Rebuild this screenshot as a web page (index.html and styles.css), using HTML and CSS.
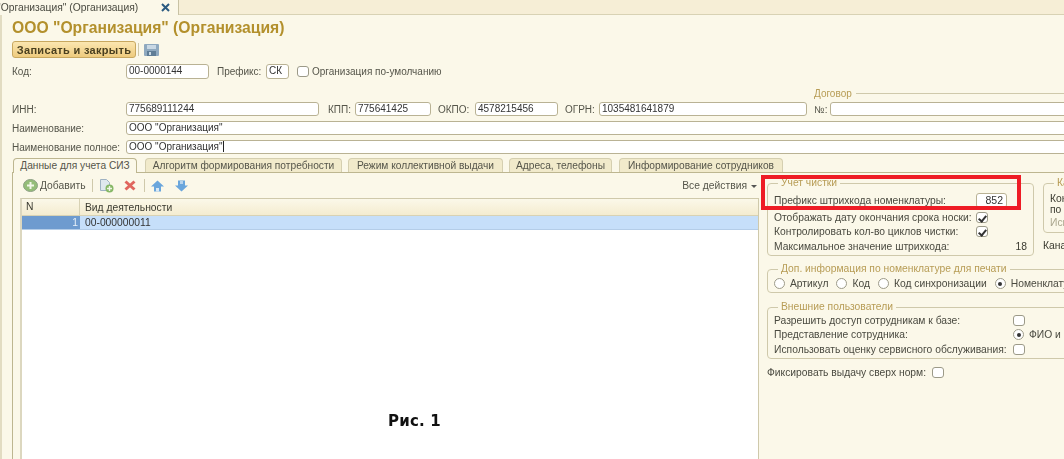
FILE: index.html
```html
<!DOCTYPE html>
<html lang="ru">
<head>
  <meta charset="UTF-8">
  <title>ООО "Организация" (Организация)</title>
  <link rel="stylesheet" href="styles.css">
</head>
<body>
  <div class="win-tabs">
    <div class="win-tab">
      <span class="win-tab-name">"Организация" (Организация)</span>
      <svg class="win-tab-close" width="9" height="9" viewBox="0 0 9 9"><path d="M1 1l7 7M8 1l-7 7" stroke="#2a5a80" stroke-width="2"/></svg>
    </div>
  </div>

  <div class="form">
    <h1 class="title">ООО "Организация" (Организация)</h1>

    <div class="cmd-bar">
      <button class="btn-main">Записать и закрыть</button>
      <span class="cmd-sep"></span>
      <svg width="15" height="12" viewBox="0 0 15 12">
        <rect x="0" y="0" width="15" height="12" rx="1" fill="#8fa9bf"/>
        <rect x="3" y="1" width="9" height="4" fill="#c9d8e4"/>
        <rect x="3" y="7" width="9" height="5" fill="#5f7d96"/>
        <rect x="5" y="8" width="2" height="3" fill="#c9d8e4"/>
      </svg>
    </div>

    <div class="row row-code">
      <span class="lbl">Код:</span>
      <span class="field w-code">00-0000144</span>
      <span class="lbl-in ml-prefix">Префикс:</span>
      <span class="field w-prefix">СК</span>
      <span class="check ml-check"></span>
      <span class="lbl-in">Организация по-умолчанию</span>
    </div>

    <div class="contract-head">
      <span class="legend-text">Договор</span>
      <span class="legend-line"></span>
    </div>

    <div class="row row-inn">
      <span class="lbl">ИНН:</span>
      <span class="field w-inn">775689111244</span>
      <span class="lbl-in w-kpp-l">КПП:</span>
      <span class="field w-kpp">775641425</span>
      <span class="lbl-in w-okpo-l">ОКПО:</span>
      <span class="field w-okpo">4578215456</span>
      <span class="lbl-in w-ogrn-l">ОГРН:</span>
      <span class="field w-ogrn">1035481641879</span>
      <span class="lbl-in w-no-l">№:</span>
      <span class="field grow"></span>
    </div>
    <div class="row row-name">
      <span class="lbl">Наименование:</span>
      <span class="field grow">ООО "Организация"</span>
    </div>
    <div class="row row-name">
      <span class="lbl">Наименование полное:</span>
      <span class="field grow">ООО "Организация"<i class="caret"></i></span>
    </div>

    <div class="tabs">
      <span class="tab active w-t1">Данные для учета СИЗ</span>
      <span class="tab w-t2">Алгоритм формирования потребности</span>
      <span class="tab w-t3">Режим коллективной выдачи</span>
      <span class="tab w-t4">Адреса, телефоны</span>
      <span class="tab w-t5">Информирование сотрудников</span>
    </div>

    <div class="panel">
      <div class="left-col">
        <div class="toolbar">
          <svg class="ic-add" width="15" height="13" viewBox="0 0 15 13">
            <ellipse cx="7.500" cy="6.500" rx="7" ry="6" fill="#94bd78" stroke="#8d9f84"/>
            <path d="M7.500 3v7M4 6.500h7" stroke="#f2f6e8" stroke-width="2"/>
          </svg>
          <span class="tool-text">Добавить</span>
          <span class="tool-sep"></span>
          <svg class="ic-doc" width="15" height="14" viewBox="0 0 15 14">
            <path d="M1.500 .5h6l3 3v8h-9z" fill="#dfe8ee" stroke="#9fb2c2"/>
            <circle cx="10.500" cy="9.500" r="4" fill="#86b866"/>
            <path d="M10.500 7v5M8 9.500h5" stroke="#f2f6e8" stroke-width="1.400"/>
          </svg>
          <svg class="ic-del" width="12" height="11" viewBox="0 0 12 11"><path d="M1.500 1.500l9 8M10.500 1.500l-9 8" stroke="#e0665e" stroke-width="3"/></svg>
          <span class="tool-sep sep-2"></span>
          <svg class="ic-up" width="13" height="12" viewBox="0 0 13 12"><path d="M6.500 .5L13 6.500H10V11.500H3V6.500H0z" fill="#6aa6dc"/><path d="M5 8h3v3.500H5z" fill="#d8e8f4"/></svg>
          <svg class="ic-down" width="13" height="12" viewBox="0 0 13 12"><path d="M6.500 11.500L13 5.500H10V.5H3V5.500H0z" fill="#6aa6dc"/><path d="M5 1h3v3H5z" fill="#b8d4ec"/></svg>
          <span class="tool-text all-actions">Все действия</span>
          <span class="arrow-down"></span>
        </div>
        <div class="grid-box">
          <div class="grid-head">
            <span class="cell-n">N</span>
            <span class="cell-v">Вид деятельности</span>
          </div>
          <div class="grid-row">
            <span class="cell-n num">1</span>
            <span class="cell-v">00-000000011</span>
          </div>
        </div>
      </div>

      <div class="right-col">
        <div class="right-top">
          <fieldset class="group g-clean">
            <legend>Учет чистки</legend>
            <div class="opt o-first"><span class="opt-lbl">Префикс штрихкода номенклатуры:</span><span class="field w-852">852</span></div>
            <div class="opt"><span class="opt-lbl">Отображать дату окончания срока носки:</span><span class="check on"></span></div>
            <div class="opt"><span class="opt-lbl">Контролировать кол-во циклов чистки:</span><span class="check on"></span></div>
            <div class="opt"><span class="opt-lbl">Максимальное значение штрихкода:</span><span class="max-val">18</span></div>
          </fieldset>
          <div class="side">
            <fieldset class="group g-side">
              <legend>Ка</legend>
              <div class="side-text">Кон<br>по</div>
              <div class="side-muted">Исп</div>
            </fieldset>
            <div class="side-label">Кана</div>
          </div>
        </div>

        <fieldset class="group g-print">
          <legend>Доп. информация по номенклатуре для печати</legend>
          <div class="radios">
            <span class="radio"></span><span class="r-text">Артикул</span>
            <span class="radio"></span><span class="r-text">Код</span>
            <span class="radio"></span><span class="r-text">Код синхронизации</span>
            <span class="radio on"></span><span class="r-text">Номенклатура</span>
          </div>
        </fieldset>

        <fieldset class="group g-ext">
          <legend>Внешние пользователи</legend>
          <div class="opt o-ext"><span class="opt-lbl">Разрешить доступ сотрудникам к базе:</span><span class="check"></span></div>
          <div class="opt o-ext"><span class="opt-lbl">Представление сотрудника:</span><span class="radio on"></span><span class="r-text">ФИО и</span></div>
          <div class="opt o-ext"><span class="opt-lbl">Использовать оценку сервисного обслуживания:</span><span class="check"></span></div>
        </fieldset>

        <div class="over-norm"><span class="over-lbl">Фиксировать выдачу сверх норм:</span><span class="check"></span></div>
      </div>
    </div>
  </div>

  <div class="red-frame"></div>
  <div class="caption">Рис. 1</div>
</body>
</html>
```

FILE: styles.css
```css
* { margin: 0; padding: 0; box-sizing: border-box; }
html, body { width: 1064px; height: 459px; overflow: hidden; }
body { position: relative; background: #fbf8e9; color: #3a3a30; font: 10px 'Liberation Sans', sans-serif; }

.win-tabs { height: 15px; background: #f6eed6; border-bottom: 1px solid #d8d2b4; filter: blur(.45px); }
.win-tab { width: 179px; height: 15px; background: #fbf8e9; border-right: 1px solid #c8c2a4; display: flex; align-items: center; overflow: hidden; font-size: 10.300px; }
.win-tab-name { margin-left: -3px; width: 164px; flex: none; white-space: nowrap; color: #4a4a40; }
.win-tab-close { flex: none; }

.form { height: 444px; padding-left: 10px; border-left: 2px solid #e2dcc2; filter: blur(.45px); }
.title { font-size: 15.700px; font-weight: bold; color: #b3902c; height: 26px; line-height: 26px; white-space: nowrap; }

.cmd-bar { display: flex; align-items: center; height: 17px; }
.btn-main { width: 124px; height: 17px; border: 1px solid #c8a860; border-radius: 3px; background: linear-gradient(#fbe6b0, #eecb7e); font: bold 11px 'Liberation Sans', sans-serif; letter-spacing: .3px; color: #4a4020; }
.cmd-sep { width: 1px; height: 13px; background: #cfc9ab; margin: 0 5px 0 2px; }

.row { display: flex; align-items: center; height: 14px; }
.row-code { margin-top: 6px; height: 15px; }
.contract-head { display: flex; align-items: center; height: 14px; margin-top: 7px; padding-left: 802px; }
.legend-text { color: #b79c55; }
.legend-line { flex: 1; height: 1px; margin-left: 4px; background: #cfc9ab; }
.row-inn { margin-top: 2px; }
.row-name { margin-top: 5px; }

.lbl { width: 114px; flex: none; white-space: nowrap; color: #55554a; }
.lbl-in { flex: none; white-space: nowrap; color: #55554a; }
.field { display: block; flex: none; height: 100%; line-height: 12px; padding-left: 2px; background: #fff; border: 1px solid #b9b294; border-radius: 3px; color: #333; white-space: nowrap; overflow: hidden; }
.field.grow { flex: 1; margin-right: -12px; }
.caret { display: inline-block; width: 1px; height: 11px; background: #222; vertical-align: -2px; }

.w-code { width: 83px; }
.ml-prefix { margin-left: 8px; width: 49px; }
.w-prefix { width: 23px; }
.ml-check { margin: 0 3px 0 8px; }
.w-inn { width: 193px; }
.w-kpp-l { width: 27px; margin-left: 9px; }
.w-kpp { width: 76px; }
.w-okpo-l { width: 37px; margin-left: 7px; }
.w-okpo { width: 83px; }
.w-ogrn-l { width: 34px; margin-left: 7px; }
.w-ogrn { width: 208px; }
.w-no-l { width: 16px; margin-left: 7px; }

.check { display: inline-block; flex: none; width: 12px; height: 11px; background: #fff; border: 1px solid #9c9a88; border-radius: 3px; position: relative; }
.check.on::after { content: ""; position: absolute; left: 3px; top: 1px; width: 3px; height: 6px; border: solid #333; border-width: 0 2px 2px 0; transform: rotate(40deg); }

.tabs { display: flex; height: 14px; margin-top: 4px; padding-left: 1px; gap: 6px; font-size: 10.200px; }
.tab { height: 14px; line-height: 14px; text-align: center; background: #f1eacb; border: 1px solid #d5cfb0; border-bottom: 0; border-radius: 4px 4px 0 0; color: #55554a; white-space: nowrap; }
.tab.active { background: #fbf8e9; border-color: #bdb690; height: 15px; position: relative; }
.w-t1 { width: 124px; }
.w-t2 { width: 197px; margin-left: 2px; }
.w-t3 { width: 155px; }
.w-t4 { width: 103px; }
.w-t5 { width: 164px; margin-left: 1px; }

.panel { display: flex; height: 290px; margin-right: -12px; border-top: 1px solid #bdb690; border-left: 1px solid #bdb690; }
.left-col { width: 746px; flex: none; padding-left: 7px; }
.toolbar { display: flex; align-items: center; height: 25px; }
.ic-add { margin-left: 3px; }
.tool-text { margin-left: 2px; color: #55554a; font-size: 10.300px; }
.tool-sep { width: 1px; height: 13px; background: #cfc9ab; margin: 0 6px; }
.ic-del { margin-left: 10px; }
.sep-2 { margin-left: 8px; }
.ic-down { margin-left: 11px; }
.all-actions { margin-left: auto; }
.arrow-down { width: 0; height: 0; margin: 2px 2px 0 4px; border: 3px solid transparent; border-top-color: #555; border-bottom: 0; }

.grid-box { width: 739px; height: 270px; background: #fff; border: 1px solid #cfc9ab; border-left: 2px solid #dcd7bf; border-bottom: 0; }
.grid-head, .grid-row { display: flex; align-items: center; font-size: 10.300px; }
.grid-head { height: 17px; background: linear-gradient(#fbf8e9, #f4ecd0); border-bottom: 1px solid #d8d2b4; }
.grid-row { height: 14px; background: #c6dffa; border-bottom: 1px solid #b4cde8; color: #333; }
.cell-n { width: 58px; flex: none; padding-left: 4px; }
.cell-n.num { height: 100%; line-height: 13px; text-align: right; padding-right: 2px; background: #6e9bcf; color: #e8f0f8; }
.cell-v { padding-left: 5px; }
.grid-head .cell-n { border-right: 1px solid #d8d2b4; height: 100%; line-height: 16px; }

.right-col { flex: 1; padding-left: 8px; min-width: 0; overflow: hidden; font-size: 10.300px; }
.right-top { display: flex; gap: 9px; width: 400px; }
.group { border: 1px solid #cfc9ab; border-radius: 4px; padding: 0 6px; }
.group legend { margin-left: 4px; padding: 0 3px; line-height: 12px; color: #b79c55; white-space: nowrap; }
.g-clean { width: 267px; height: 79px; margin-top: 4px; flex: none; }
.opt { display: flex; align-items: center; height: 14.500px; white-space: nowrap; }
.opt-lbl { width: 202px; flex: none; color: #4a4a40; }
.o-first { height: 15px; margin-top: 4px; margin-bottom: 2px; }
.w-852 { width: 31px; text-align: right; padding-right: 3px; font-size: 10.500px; }
.max-val { width: 51px; text-align: right; }
.side { width: 120px; flex: none; }
.g-side { height: 56px; margin-top: 4px; padding: 0 6px; }
.side-text { line-height: 11px; margin-top: 4px; }
.side-muted { color: #aaa68e; margin-top: 2px; }
.side-label { margin-top: 7px; }

.g-print { width: 400px; height: 30px; margin-top: 7px; }
.radios { display: flex; align-items: center; height: 15px; margin-top: 1px; white-space: nowrap; }
.radio { display: inline-block; flex: none; width: 11px; height: 11px; border: 1px solid #9c9a88; border-radius: 50%; background: #fff; position: relative; }
.radio.on::after { content: ""; position: absolute; left: 2.500px; top: 2.500px; width: 4px; height: 4px; border-radius: 50%; background: #333; }
.r-text { margin: 0 8px 0 5px; color: #4a4a40; }

.g-ext { width: 400px; height: 58px; margin-top: 8px; }
.o-ext .opt-lbl { width: 239px; }
.over-norm { display: flex; align-items: center; height: 14px; margin-top: 6px; color: #4a4a40; white-space: nowrap; }
.over-lbl { width: 165px; flex: none; }

.red-frame { position: absolute; left: 761px; top: 175px; width: 260px; height: 35px; border: 4px solid #ee1c25; }
.caption { position: absolute; left: 388px; top: 412px; font: bold 15px 'DejaVu Sans', sans-serif; letter-spacing: .2px; color: #111; }
```
